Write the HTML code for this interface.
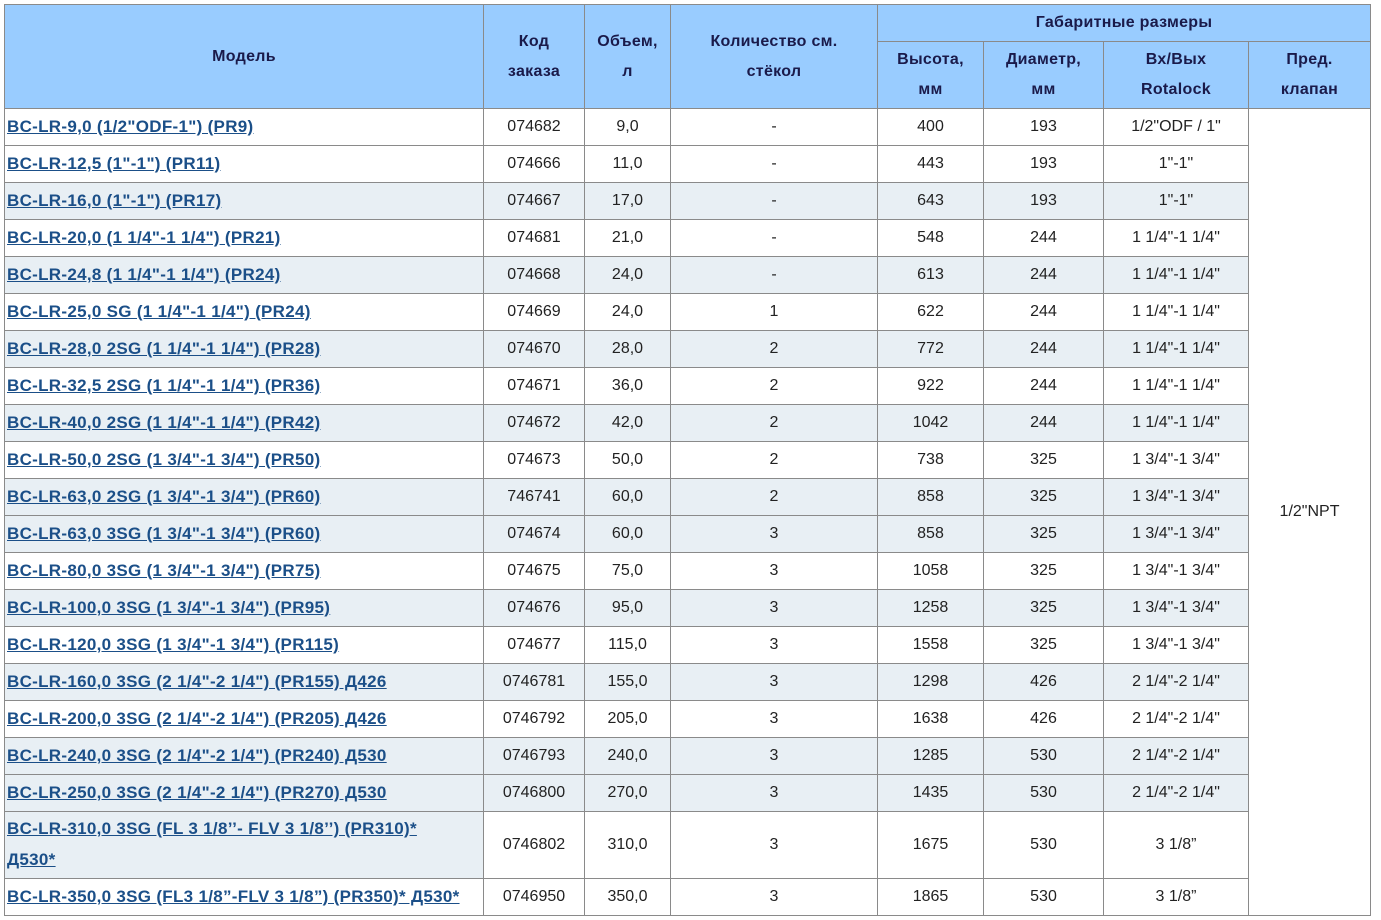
<!DOCTYPE html>
<html><head><meta charset="utf-8"><style>
body{margin:0;background:#fff;}
table{position:absolute;left:4px;top:4px;border-collapse:collapse;table-layout:fixed;width:1367px;font-family:"Liberation Sans",sans-serif;font-size:16px;color:#222;}
td,th{border:1px solid #8a8a8a;padding:0 2px;text-align:center;height:36px;box-sizing:border-box;}
th{background:#99ccff;color:#1a1a4a;font-weight:bold;font-size:16px;line-height:30px;letter-spacing:0.3px;}
td:first-child{text-align:left;white-space:nowrap;}
a{color:#1b4f88;text-decoration:underline;font-weight:bold;font-size:17px;letter-spacing:0.3px;}
tr.s td{background:#e8eff4;}
td.w{background:#fff !important;}
</style></head><body>
<table>
<colgroup><col style="width:479px"><col style="width:101px"><col style="width:86px"><col style="width:207px"><col style="width:106px"><col style="width:120px"><col style="width:145px"><col style="width:122px"></colgroup>
<tr style="height:37px"><th rowspan="2">Модель</th><th rowspan="2">Код<br>заказа</th><th rowspan="2">Объем,<br>л</th><th rowspan="2">Количество см.<br>стёкол</th><th colspan="4">Габаритные размеры</th></tr>
<tr style="height:67px"><th>Высота,<br>мм</th><th>Диаметр,<br>мм</th><th>Вх/Вых<br>Rotalock</th><th>Пред.<br>клапан</th></tr>
<tr style="height:37px"><td><a>BC-LR-9,0 (1/2"ODF-1") (PR9)</a></td><td>074682</td><td>9,0</td><td>-</td><td>400</td><td>193</td><td>1/2"ODF / 1"</td><td rowspan="21" class="w">1/2"NPT</td></tr>
<tr style="height:37px"><td><a>BC-LR-12,5 (1"-1") (PR11)</a></td><td>074666</td><td>11,0</td><td>-</td><td>443</td><td>193</td><td>1"-1"</td></tr>
<tr class="s" style="height:37px"><td><a>BC-LR-16,0 (1"-1") (PR17)</a></td><td>074667</td><td>17,0</td><td>-</td><td>643</td><td>193</td><td>1"-1"</td></tr>
<tr style="height:37px"><td><a>BC-LR-20,0 (1 1/4"-1 1/4") (PR21)</a></td><td>074681</td><td>21,0</td><td>-</td><td>548</td><td>244</td><td>1 1/4"-1 1/4"</td></tr>
<tr class="s" style="height:37px"><td><a>BC-LR-24,8 (1 1/4"-1 1/4") (PR24)</a></td><td>074668</td><td>24,0</td><td>-</td><td>613</td><td>244</td><td>1 1/4"-1 1/4"</td></tr>
<tr style="height:37px"><td><a>BC-LR-25,0 SG (1 1/4"-1 1/4") (PR24)</a></td><td>074669</td><td>24,0</td><td>1</td><td>622</td><td>244</td><td>1 1/4"-1 1/4"</td></tr>
<tr class="s" style="height:37px"><td><a>BC-LR-28,0 2SG (1 1/4"-1 1/4") (PR28)</a></td><td>074670</td><td>28,0</td><td>2</td><td>772</td><td>244</td><td>1 1/4"-1 1/4"</td></tr>
<tr style="height:37px"><td><a>BC-LR-32,5 2SG (1 1/4"-1 1/4") (PR36)</a></td><td>074671</td><td>36,0</td><td>2</td><td>922</td><td>244</td><td>1 1/4"-1 1/4"</td></tr>
<tr class="s" style="height:37px"><td><a>BC-LR-40,0 2SG (1 1/4"-1 1/4") (PR42)</a></td><td>074672</td><td>42,0</td><td>2</td><td>1042</td><td>244</td><td>1 1/4"-1 1/4"</td></tr>
<tr style="height:37px"><td><a>BC-LR-50,0 2SG (1 3/4"-1 3/4") (PR50)</a></td><td>074673</td><td>50,0</td><td>2</td><td>738</td><td>325</td><td>1 3/4"-1 3/4"</td></tr>
<tr class="s" style="height:37px"><td><a>BC-LR-63,0 2SG (1 3/4"-1 3/4") (PR60)</a></td><td>746741</td><td>60,0</td><td>2</td><td>858</td><td>325</td><td>1 3/4"-1 3/4"</td></tr>
<tr class="s" style="height:37px"><td><a>BC-LR-63,0 3SG (1 3/4"-1 3/4") (PR60)</a></td><td>074674</td><td>60,0</td><td>3</td><td>858</td><td>325</td><td>1 3/4"-1 3/4"</td></tr>
<tr style="height:37px"><td><a>BC-LR-80,0 3SG (1 3/4"-1 3/4") (PR75)</a></td><td>074675</td><td>75,0</td><td>3</td><td>1058</td><td>325</td><td>1 3/4"-1 3/4"</td></tr>
<tr class="s" style="height:37px"><td><a>BC-LR-100,0 3SG (1 3/4"-1 3/4") (PR95)</a></td><td>074676</td><td>95,0</td><td>3</td><td>1258</td><td>325</td><td>1 3/4"-1 3/4"</td></tr>
<tr style="height:37px"><td><a>BC-LR-120,0 3SG (1 3/4"-1 3/4") (PR115)</a></td><td>074677</td><td>115,0</td><td>3</td><td>1558</td><td>325</td><td>1 3/4"-1 3/4"</td></tr>
<tr class="s" style="height:37px"><td><a>BC-LR-160,0 3SG (2 1/4"-2 1/4") (PR155) Д426</a></td><td>0746781</td><td>155,0</td><td>3</td><td>1298</td><td>426</td><td>2 1/4"-2 1/4"</td></tr>
<tr style="height:37px"><td><a>BC-LR-200,0 3SG (2 1/4"-2 1/4") (PR205) Д426</a></td><td>0746792</td><td>205,0</td><td>3</td><td>1638</td><td>426</td><td>2 1/4"-2 1/4"</td></tr>
<tr class="s" style="height:37px"><td><a>BC-LR-240,0 3SG (2 1/4"-2 1/4") (PR240) Д530</a></td><td>0746793</td><td>240,0</td><td>3</td><td>1285</td><td>530</td><td>2 1/4"-2 1/4"</td></tr>
<tr class="s" style="height:37px"><td><a>BC-LR-250,0 3SG (2 1/4"-2 1/4") (PR270) Д530</a></td><td>0746800</td><td>270,0</td><td>3</td><td>1435</td><td>530</td><td>2 1/4"-2 1/4"</td></tr>
<tr style="height:67px"><td style="background:#e8eff4;line-height:30px"><a>BC-LR-310,0 3SG (FL 3 1/8’’- FLV 3 1/8’’) (PR310)*<br>Д530*</a></td><td>0746802</td><td>310,0</td><td>3</td><td>1675</td><td>530</td><td>3 1/8”</td></tr>
<tr style="height:37px"><td><a>BC-LR-350,0 3SG (FL3 1/8”-FLV 3 1/8”) (PR350)* Д530*</a></td><td>0746950</td><td>350,0</td><td>3</td><td>1865</td><td>530</td><td>3 1/8”</td></tr>
</table>
</body></html>
